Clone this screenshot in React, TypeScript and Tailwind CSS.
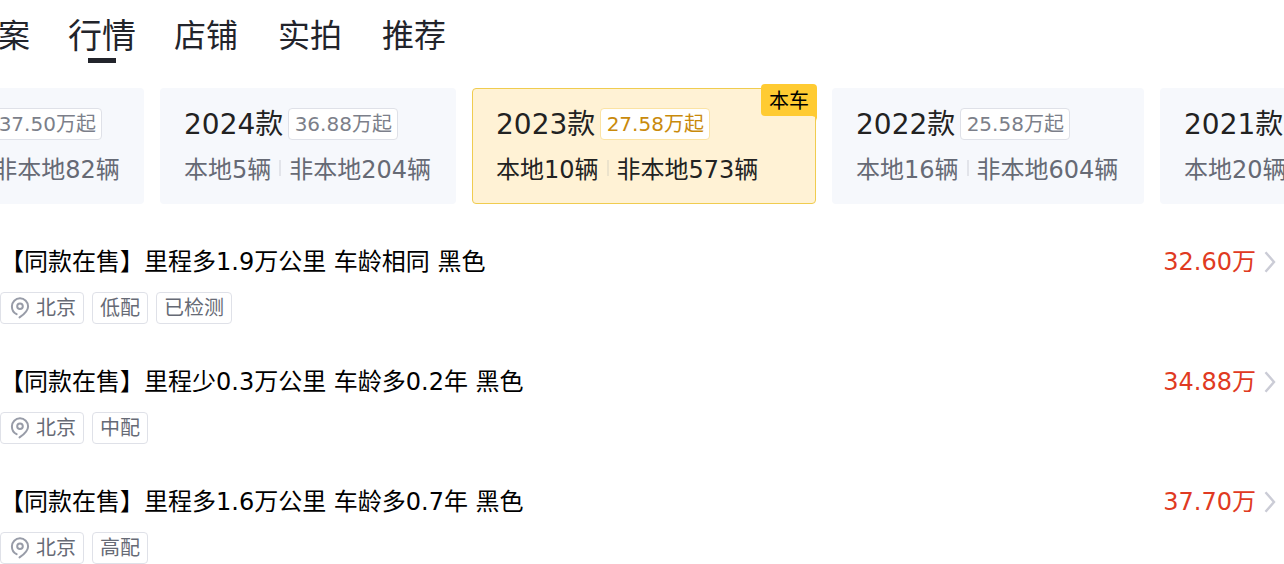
const tabs = ["方案", "行情", "店铺", "实拍", "推荐"];
const activeTab = "行情";

const years = [
  { year: "2025款", price: "37.50万起", local: "本地2辆", other: "非本地82辆", width: "w-[280px]" },
  { year: "2024款", price: "36.88万起", local: "本地5辆", other: "非本地204辆", width: "w-[296px]" },
  { year: "2023款", price: "27.58万起", local: "本地10辆", other: "非本地573辆", width: "w-[344px]", current: true },
  { year: "2022款", price: "25.58万起", local: "本地16辆", other: "非本地604辆", width: "w-[312px]" },
  { year: "2021款", price: "22.80万起", local: "本地20辆", other: "非本地512辆", width: "w-[312px]" },
];

const cars = [
  { title: "【同款在售】里程多1.9万公里 车龄相同 黑色", price: "32.60万", city: "北京", tags: ["低配", "已检测"] },
  { title: "【同款在售】里程少0.3万公里 车龄多0.2年 黑色", price: "34.88万", city: "北京", tags: ["中配"] },
  { title: "【同款在售】里程多1.6万公里 车龄多0.7年 黑色", price: "37.70万", city: "北京", tags: ["高配"] },
];

function PinIcon() {
  return (
    <svg viewBox="0 0 24 24" className="mr-1 size-6" fill="none" stroke="#989ca8" strokeWidth="2" aria-hidden="true">
      <path d="M8.6 18.2C5.6 16.6 3.9 13.8 3.9 10.4a8.1 8.1 0 0 1 16.2 0c0 4.6-3.6 7.6-8.6 11" strokeLinecap="round" />
      <circle cx="12" cy="10.2" r="2.8" />
    </svg>
  );
}

function ChevronIcon() {
  return (
    <svg viewBox="0 0 12 24" className="h-6 w-3" fill="none" stroke="#cbccd6" strokeWidth="2.4" aria-hidden="true">
      <path d="M1.5 2.2 10 12l-8.5 9.8" />
    </svg>
  );
}

function YearCard({ item }: { item: (typeof years)[number] }) {
  return (
    <button
      className={`relative shrink-0 rounded border px-[23px] pt-[19px] pb-[17px] text-left ${item.width} ${
        item.current ? "border-[#f0cc4f] bg-[#fff2d5] text-[#222222]" : "border-transparent bg-[#f6f8fc] text-[#666a75]"
      }`}
    >
      <span className="flex h-8 gap-[5px]">
        <span className="text-[28px] leading-[34px] text-[#222222]">{item.year}</span>
        <span
          className={`flex w-[110px] justify-center rounded border bg-white text-xl leading-[30px] ${
            item.current ? "border-[#fbe3a4] text-[#c98a0c]" : "border-[#dfe1e8] text-[#7c7f8a]"
          }`}
        >
          {item.price}
        </span>
      </span>
      <span className="mt-3.5 flex h-8 gap-2 text-2xl leading-8">
        {item.local}
        <span className={`mt-1.5 h-4 w-0.5 ${item.current ? "bg-[#ece3cc]" : "bg-[#e2e4ea]"}`} />
        {item.other}
      </span>
      {item.current && (
        <span className="absolute -top-[5px] -right-[2px] h-8 rounded-t rounded-bl bg-[#ffcb32] px-2 text-xl leading-[34px] text-black">
          本车
          <svg viewBox="0 0 6 6" className="absolute top-full right-0 size-1.5" fill="#ffcb32" aria-hidden="true">
            <path d="M0 0h6v6C6 2 4 0 0 0Z" />
          </svg>
        </span>
      )}
    </button>
  );
}

export default function App() {
  return (
    <main className="overflow-hidden bg-white font-['DejaVu_Sans','Noto_Sans_CJK_SC',sans-serif] whitespace-nowrap">
      <nav className="-ml-[34px] flex h-[72px] gap-10 text-[32px] leading-[72px] text-[#22242b]">
        {tabs.map((tab) =>
          tab === activeTab ? (
            <a key={tab} href="#" className="relative -mx-0.5 text-[34px]">
              {tab}
              <span className="absolute bottom-[9px] left-1/2 h-[5px] w-7 -translate-x-1/2 bg-[#22242b]" />
            </a>
          ) : (
            <a key={tab} href="#">
              {tab}
            </a>
          ),
        )}
      </nav>

      <div className="-ml-[136px] flex gap-4 pt-4">
        {years.map((item) => (
          <YearCard key={item.year} item={item} />
        ))}
      </div>

      <ul className="flex flex-col gap-10 pt-10">
        {cars.map((car) => (
          <li key={car.title}>
            <a href="#" className="flex h-9 items-center pr-2 text-2xl text-black">
              <span className="flex-1">{car.title}</span>
              <span className="mr-2 text-[#e03a22]">{car.price}</span>
              <ChevronIcon />
            </a>
            <div className="mt-3 flex gap-2 text-xl leading-[30px] text-[#666a75]">
              <span className="flex items-center rounded border border-[#dfe1e8] px-[7px]">
                <PinIcon />
                {car.city}
              </span>
              {car.tags.map((tag) => (
                <span key={tag} className="rounded border border-[#dfe1e8] px-[7px]">
                  {tag}
                </span>
              ))}
            </div>
          </li>
        ))}
      </ul>
    </main>
  );
}
